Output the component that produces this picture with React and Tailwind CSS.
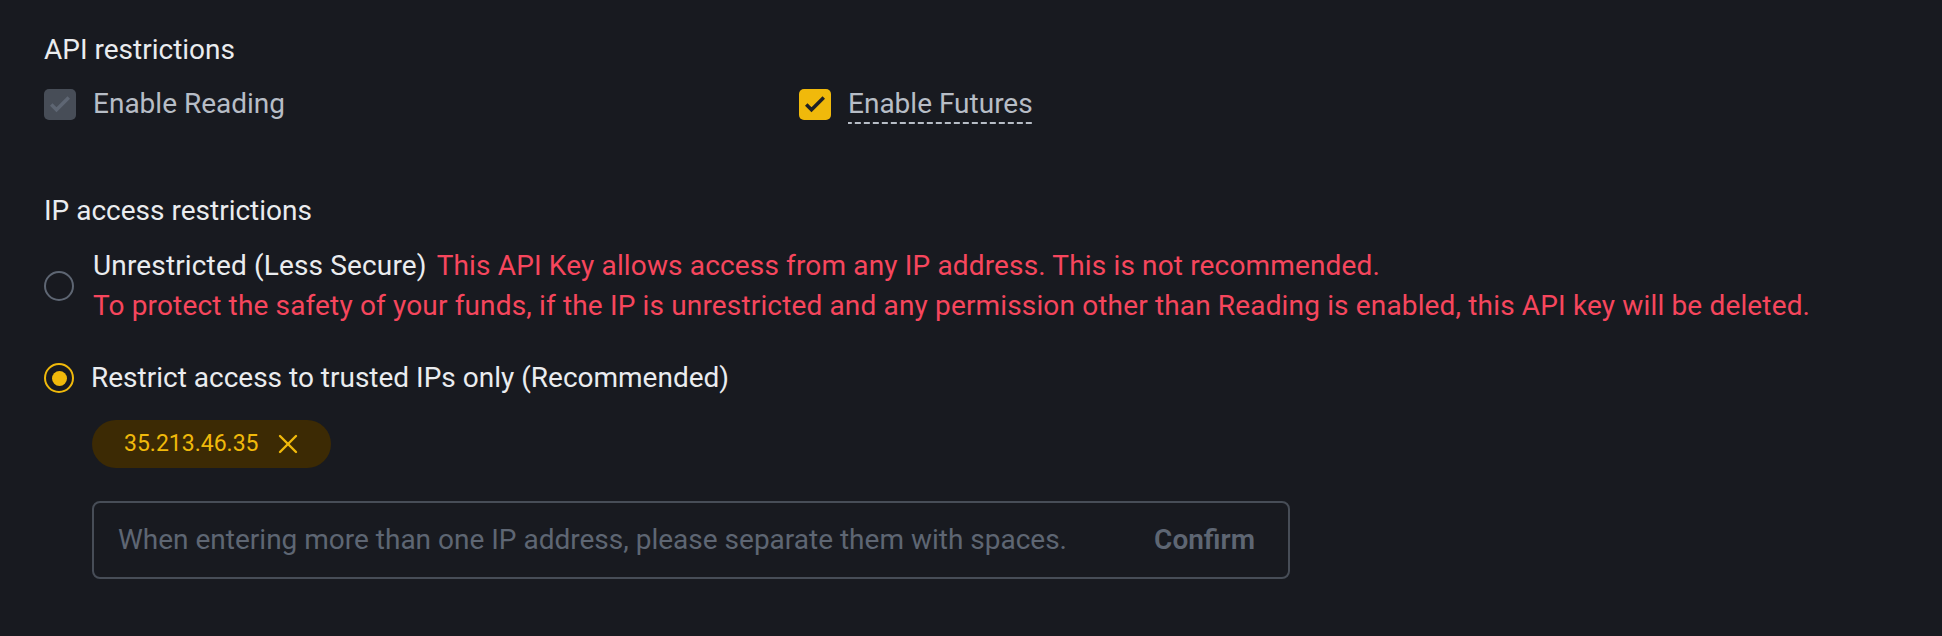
import { X } from "lucide-react";

function CheckBox({ checked, disabled }) {
  return (
    <span
      className={`w-[32px] h-[31px] rounded-[5px] flex items-center justify-center shrink-0 ${
        disabled ? "bg-[#474d57]" : "bg-[#f0b90b]"
      }`}
    >
      {checked && (
        <svg viewBox="0 0 24 24" className="w-[28px] h-[28px]" fill="none">
          <path
            d="M4.5 12.5l4.5 4.5L19.5 6.5"
            stroke={disabled ? "#5e6673" : "#1e2026"}
            strokeWidth="3"
          />
        </svg>
      )}
    </span>
  );
}

function Radio({ checked }) {
  return (
    <span
      className={`w-[30px] h-[30px] rounded-full border-2 flex items-center justify-center shrink-0 ${
        checked ? "border-[#f0b90b]" : "border-[#5e6673]"
      }`}
    >
      {checked && <span className="w-[15px] h-[15px] rounded-full bg-[#f0b90b]" />}
    </span>
  );
}

export default function App() {
  return (
    <div className="w-[1942px] h-[636px] bg-[#181a20] font-[Roboto,sans-serif] text-[28px] leading-[40px] text-[#eaecef] pl-[44px] pt-[30px]">
      {/* API restrictions */}
      <h2 className="font-normal">API restrictions</h2>
      <div className="flex mt-[14px]">
        <label className="w-[755px] flex items-center gap-[17px]">
          <CheckBox checked disabled />
          <span className="text-[#b7bdc6]">Enable Reading</span>
        </label>
        <label className="flex items-center gap-[17px]">
          <CheckBox checked />
          <span className="text-[#b7bdc6] bg-[linear-gradient(to_right,#b7bdc6_6px,transparent_6px)] bg-[length:9px_2px] bg-repeat-x bg-bottom">
            Enable Futures
          </span>
        </label>
      </div>

      {/* IP access restrictions */}
      <h2 className="font-normal mt-[67px]">IP access restrictions</h2>
      <div className="flex items-center gap-[19px] mt-[15px]">
        <Radio />
        <div className="tracking-[0.15px]">
          <div>
            <span>Unrestricted (Less Secure)</span>
            <span className="ml-[10px] text-[#f6465d]">
              This API Key allows access from any IP address. This is not recommended.
            </span>
          </div>
          <div className="text-[#f6465d]">
            To protect the safety of your funds, if the IP is unrestricted and any permission other than Reading is enabled, this API key will be deleted.
          </div>
        </div>
      </div>

      <div className="flex items-center gap-[17px] mt-[32px]">
        <Radio checked />
        <span>Restrict access to trusted IPs only (Recommended)</span>
      </div>

      <div className="pl-[48px]">
        <div className="mt-[22px] inline-flex items-center h-[48px] rounded-full bg-[#3c2a04] pl-[32px] pr-[27px] gap-[13px] text-[23px] text-[#f0b90b]">
          <span>35.213.46.35</span>
          <X className="w-[32px] h-[32px]" strokeWidth={1.8} />
        </div>

        <div className="mt-[33px] w-[1198px] h-[78px] rounded-lg border-2 border-[#474d57] flex items-center pl-[24px] pr-[33px]">
          <span className="flex-1 text-[#5e6673]">
            When entering more than one IP address, please separate them with spaces.
          </span>
          <span className="font-semibold text-[#5e6673]">Confirm</span>
        </div>
      </div>
    </div>
  );
}
